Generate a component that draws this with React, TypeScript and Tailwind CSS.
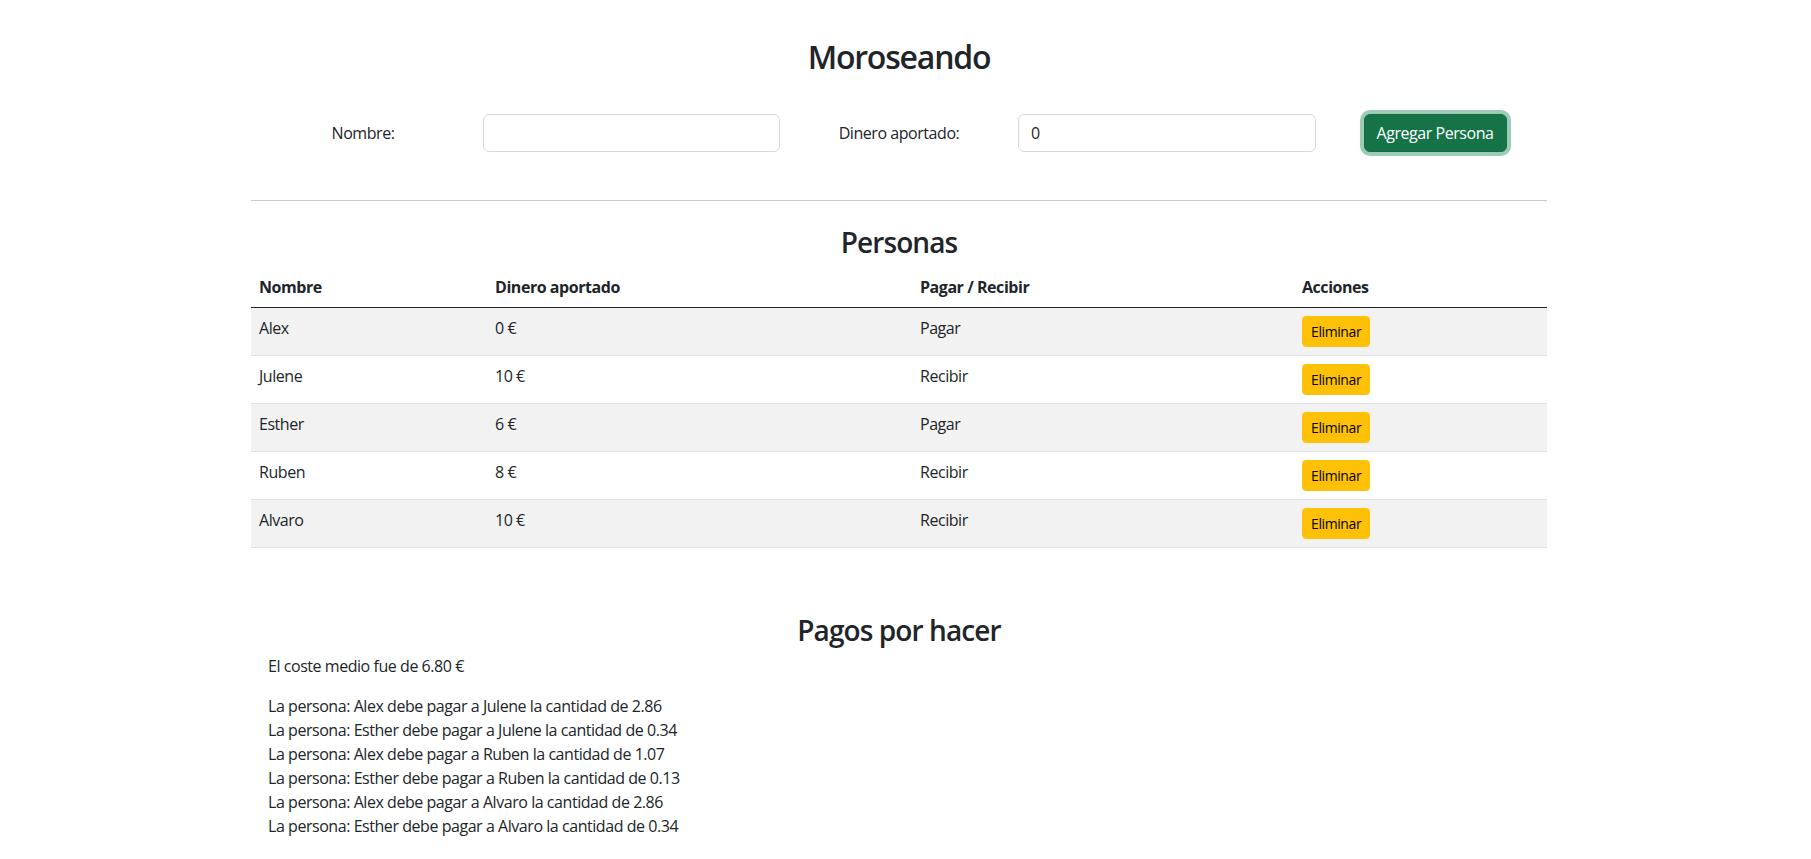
import React from "react";

type Persona = { nombre: string; dinero: number; accion: "Pagar" | "Recibir" };

const personas: Persona[] = [
  { nombre: "Alex", dinero: 0, accion: "Pagar" },
  { nombre: "Julene", dinero: 10, accion: "Recibir" },
  { nombre: "Esther", dinero: 6, accion: "Pagar" },
  { nombre: "Ruben", dinero: 8, accion: "Recibir" },
  { nombre: "Alvaro", dinero: 10, accion: "Recibir" },
];

const pagos = [
  { de: "Alex", a: "Julene", cantidad: "2.86" },
  { de: "Esther", a: "Julene", cantidad: "0.34" },
  { de: "Alex", a: "Ruben", cantidad: "1.07" },
  { de: "Esther", a: "Ruben", cantidad: "0.13" },
  { de: "Alex", a: "Alvaro", cantidad: "2.86" },
  { de: "Esther", a: "Alvaro", cantidad: "0.34" },
];

export default function App() {
  return (
    <div className="min-h-screen bg-white font-['Open_Sans',sans-serif] text-[16px] leading-6 tracking-[-0.45px] text-[#212529]">
      <div className="flex justify-center pr-[13px]">
        <div className="w-[1296px] pt-[38px] pb-3">
          <h1 className="text-center text-[32px] leading-[38px] font-semibold tracking-[-1.2px]">Moroseando</h1>

          {/* formulario */}
          <div className="-mx-[22px] mt-[38px] grid grid-cols-5">
            <div className="flex h-[38px] items-center justify-center">
              <label htmlFor="nombre">Nombre:</label>
            </div>
            <div className="flex items-center justify-center">
              <input
                id="nombre"
                type="text"
                className="h-[38px] w-[297px] shrink-0 rounded-[6px] border border-[#d5d9de] bg-white px-3 outline-none"
              />
            </div>
            <div className="flex items-center justify-center">
              <label htmlFor="dinero">Dinero aportado:</label>
            </div>
            <div className="flex items-center justify-center">
              <input
                id="dinero"
                type="number"
                defaultValue={0}
                className="h-[38px] w-[298px] shrink-0 rounded-[6px] border border-[#d5d9de] bg-white px-3 outline-none"
              />
            </div>
            <div className="flex items-center justify-center">
              <button className="h-[38px] w-[143px] shrink-0 whitespace-nowrap rounded-[6px] border border-[#146c43] bg-[#157347] text-white shadow-[0_0_0_4px_rgba(60,153,110,0.5)]">
                Agregar Persona
              </button>
            </div>
          </div>

          <div className="mt-[48px] h-px bg-[#c8c9ca]" />

          <h2 className="mt-[24px] text-center text-[28px] leading-[35px] font-semibold tracking-[-0.9px]">Personas</h2>
          <table className="mt-[7px] w-full table-fixed border-collapse">
            <colgroup>
              <col className="w-[236px]" />
              <col className="w-[425px]" />
              <col className="w-[382px]" />
              <col className="w-[253px]" />
            </colgroup>
            <thead>
              <tr className="border-b border-[#212529]">
                <th className="px-2 py-2 text-left font-bold">Nombre</th>
                <th className="px-2 py-2 text-left font-bold">Dinero aportado</th>
                <th className="px-2 py-2 text-left font-bold">Pagar / Recibir</th>
                <th className="px-2 py-2 text-left font-bold">Acciones</th>
              </tr>
            </thead>
            <tbody>
              {personas.map((p, i) => (
                <tr key={p.nombre} className={i % 2 === 0 ? "border-b border-[#dee2e6] bg-[#f2f2f2]" : "border-b border-[#dee2e6] bg-white"}>
                  <td className="px-2 py-2 align-top">{p.nombre}</td>
                  <td className="px-2 py-2 align-top">{p.dinero} €</td>
                  <td className="px-2 py-2 align-top">{p.accion}</td>
                  <td className="px-2 py-2 align-top">
                    <button className="rounded-[4px] border border-[#ffc107] bg-[#ffc107] px-2 py-1 text-[14px] leading-[21px] tracking-[-0.4px] text-black">
                      Eliminar
                    </button>
                  </td>
                </tr>
              ))}
            </tbody>
          </table>

          <h2 className="mt-[65px] text-center text-[28px] leading-[35px] font-semibold tracking-[-0.9px]">Pagos por hacer</h2>
          <div className="pl-[17px]">
            <p className="mt-[6px] mb-[16px]">El coste medio fue de 6.80 €</p>
            {pagos.map((p, i) => (
              <div key={i}>
                La persona: {p.de} debe pagar a {p.a} la cantidad de {p.cantidad}
              </div>
            ))}
          </div>
        </div>
      </div>
    </div>
  );
}
